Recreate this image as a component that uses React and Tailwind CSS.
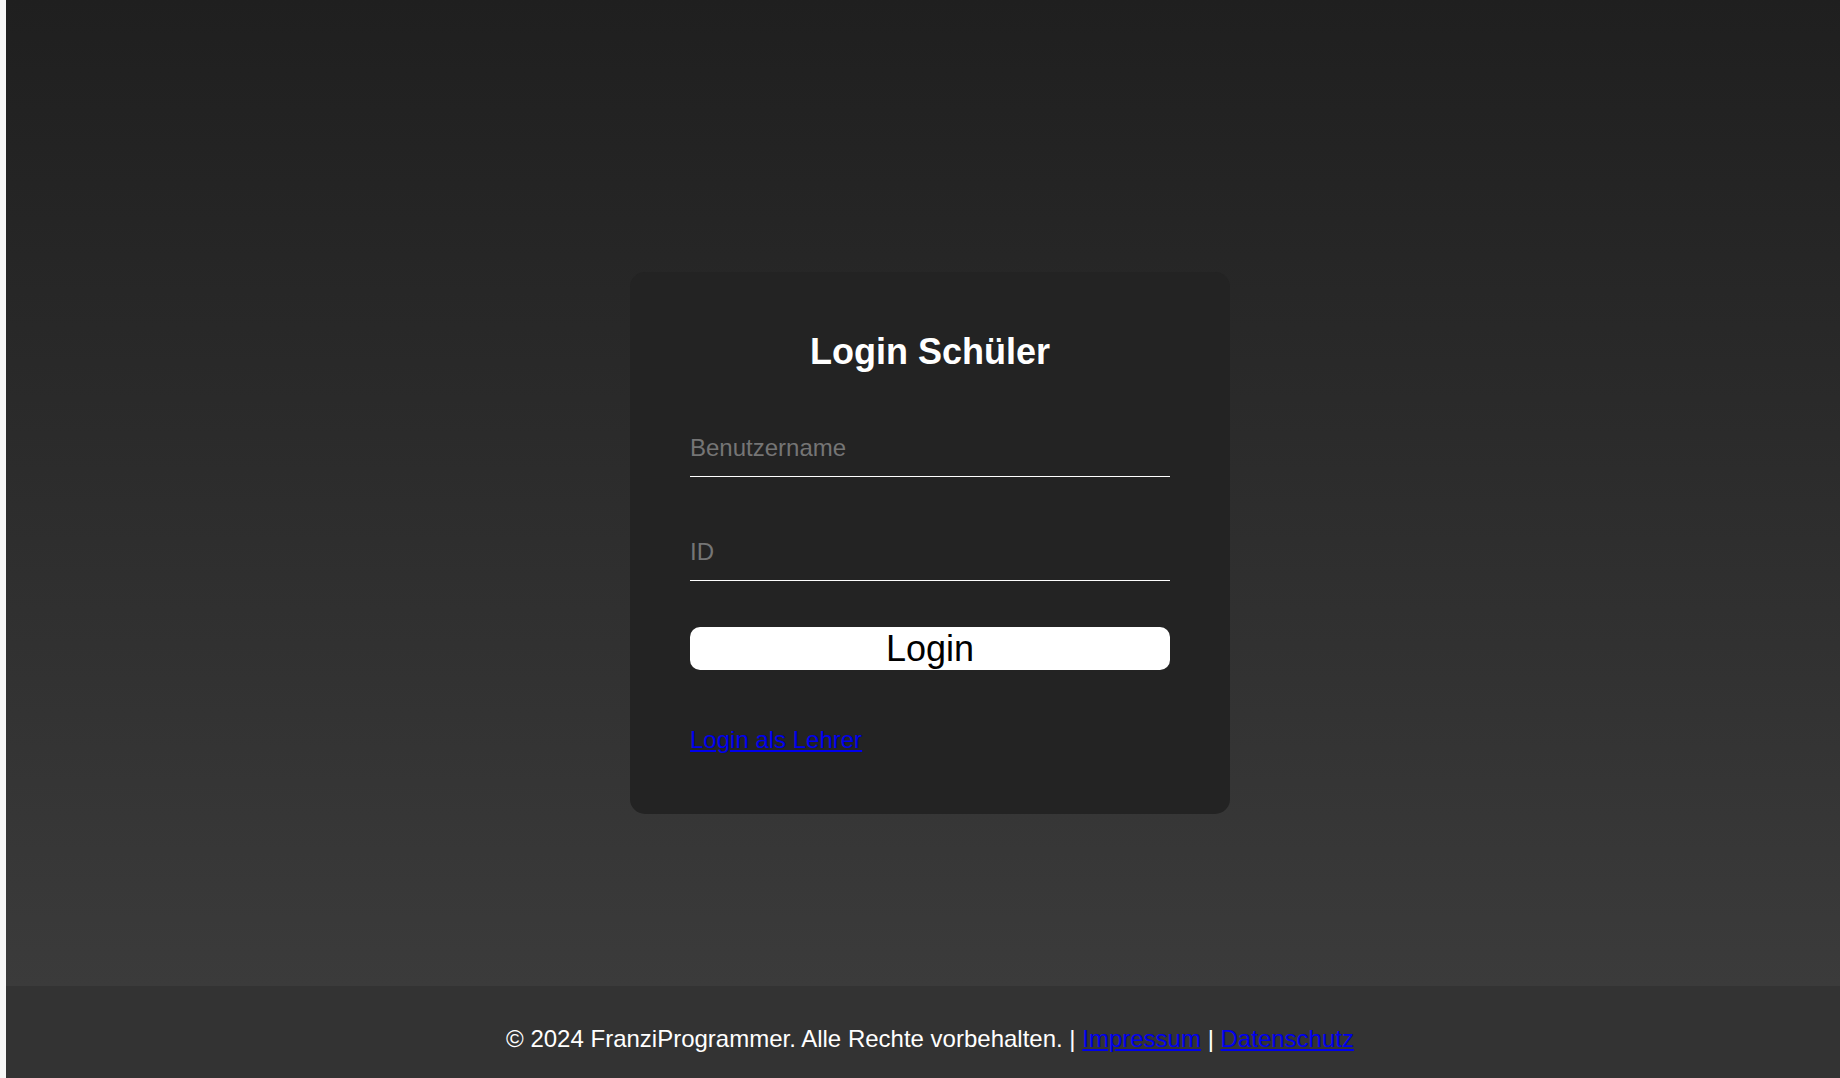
export default function App() {
  return (
    <div
      className="flex w-full min-h-[1078px] bg-[#f7f7f7]"
      style={{ fontFamily: '"Liberation Sans", Arial, sans-serif' }}
    >
      <div className="w-[6px] shrink-0 bg-[#f7f7f7]" />
      <div className="flex flex-1 flex-col">
        <main className="flex h-[986px] justify-center bg-linear-to-b from-[#1f1f1f] to-[#3b3b3b] pl-[14px] pt-[272px]">
          <div className="flex h-[542px] w-[600px] flex-col rounded-[15px] bg-[#232323] px-[60px] pt-[59px] pb-[60px]">
            <h2 className="text-center text-[36px] font-bold leading-[41px] text-white">
              Login Schüler
            </h2>
            <input
              type="text"
              placeholder="Benutzername"
              className="mt-[52px] h-[53px] w-full border-b border-white bg-transparent pt-[10px] pb-[14px] text-[24px] leading-[28px] text-white outline-none placeholder:text-[#757575]"
            />
            <input
              type="text"
              placeholder="ID"
              className="mt-[51px] h-[53px] w-full border-b border-white bg-transparent pt-[10px] pb-[14px] text-[24px] leading-[28px] text-white outline-none placeholder:text-[#757575]"
            />
            <button
              type="button"
              className="mt-[46px] h-[43px] w-full rounded-[10px] bg-white text-[36px] leading-[43px] text-black"
            >
              Login
            </button>
            <div className="mt-[56px] text-[24px] leading-[28px]">
              <a href="#" className="text-[#0000ee] underline">
                Login als Lehrer
              </a>
            </div>
          </div>
        </main>
        <footer className="h-[92px] bg-[#333333] pl-[14px] pt-[39px] text-center text-[24px] leading-[28px] text-white">
          © 2024 FranziProgrammer. Alle Rechte vorbehalten. |{" "}
          <a href="#" className="text-[#0000ee] underline">
            Impressum
          </a>{" "}
          |{" "}
          <a href="#" className="text-[#0000ee] underline">
            Datenschutz
          </a>
        </footer>
      </div>
    </div>
  );
}
